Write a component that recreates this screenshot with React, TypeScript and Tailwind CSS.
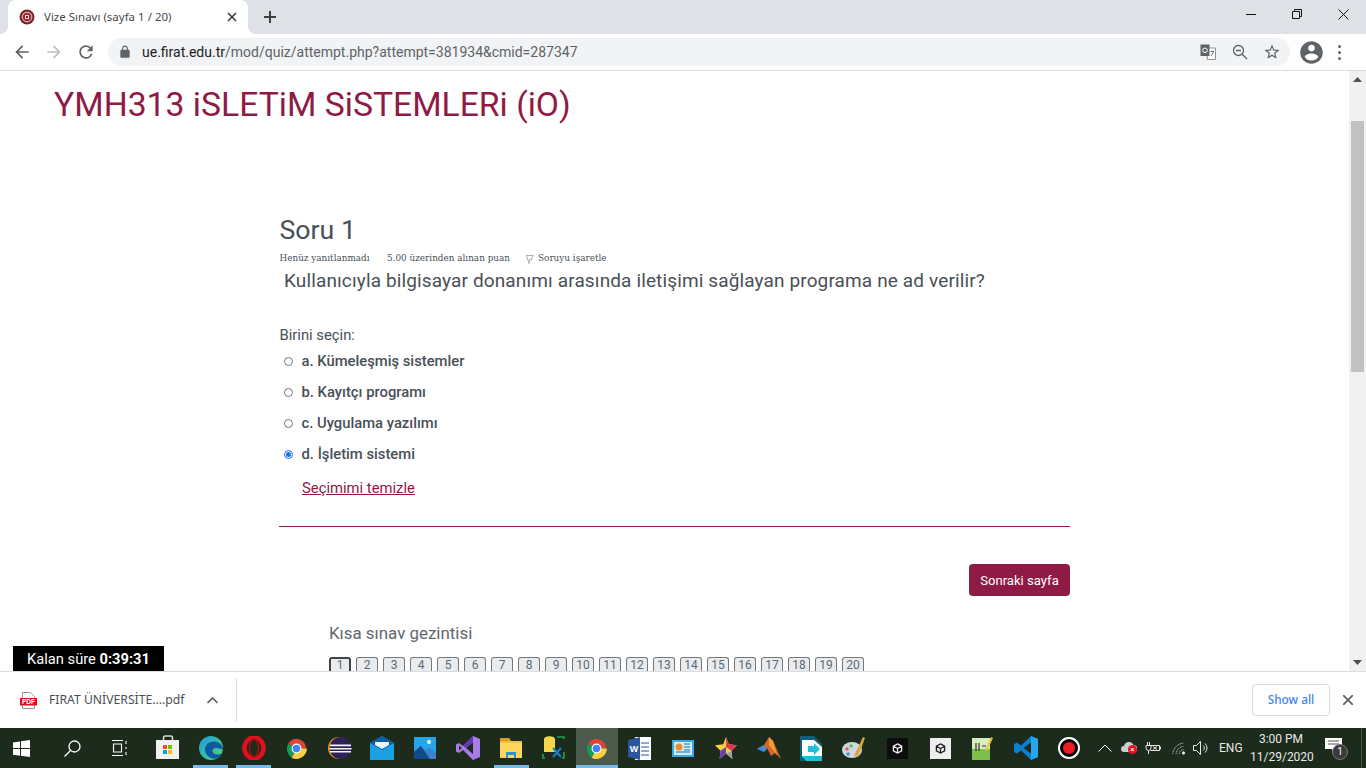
import type { ReactNode } from 'react';

const ui = 'font-["Noto_Sans",sans-serif]';

function M({ d, size = 20, className = '' }: { d: string; size?: number; className?: string }) {
  return (
    <svg width={size} height={size} viewBox="0 0 24 24" className={className} fill="currentColor">
      <path d={d} />
    </svg>
  );
}

const ARROW = 'M20 11H7.83l5.59-5.59L12 4l-8 8 8 8 1.41-1.41L7.83 13H20v-2z';
const RELOAD =
  'M17.65 6.35A7.958 7.958 0 0012 4c-4.42 0-7.99 3.58-7.99 8s3.57 8 7.99 8c3.73 0 6.84-2.55 7.73-6h-2.08A5.99 5.99 0 0112 18c-3.31 0-6-2.69-6-6s2.69-6 6-6c1.66 0 3.14.69 4.22 1.78L13 11h7V4l-2.35 2.35z';
const LOCK =
  'M18 8h-1V6c0-2.76-2.24-5-5-5S7 3.24 7 6v2H6c-1.1 0-2 .9-2 2v10c0 1.1.9 2 2 2h12c1.1 0 2-.9 2-2V10c0-1.1-.9-2-2-2zM9 6c0-1.66 1.34-3 3-3s3 1.34 3 3v2H9V6z';
const ACCOUNT =
  'M12 2C6.48 2 2 6.48 2 12s4.48 10 10 10 10-4.48 10-10S17.52 2 12 2zm0 3c1.66 0 3 1.34 3 3s-1.34 3-3 3-3-1.34-3-3 1.34-3 3-3zm0 14.2c-2.5 0-4.71-1.28-6-3.22.03-1.99 4-3.08 6-3.08 1.99 0 5.97 1.09 6 3.08-1.29 1.94-3.5 3.22-6 3.22z';

function TabBar() {
  return (
    <div className="h-[34px] bg-[#dee1e6] flex items-end pl-2 relative">
      <div className="w-[240px] h-[34px] bg-white rounded-t-[8px] flex items-center pl-[11px] pr-[9px] relative">
        <span className="absolute -left-2 bottom-0 w-2 h-2 bg-white"><span className="block w-2 h-2 bg-[#dee1e6] rounded-br-[8px]" /></span>
        <span className="absolute -right-2 bottom-0 w-2 h-2 bg-white"><span className="block w-2 h-2 bg-[#dee1e6] rounded-bl-[8px]" /></span>
        <svg width="16" height="16" viewBox="0 0 16 16">
          <circle cx="8" cy="8" r="7.5" fill="#7d2327" />
          <circle cx="8" cy="8" r="5.4" fill="#c9a6a6" />
          <circle cx="8" cy="8" r="4" fill="#a3212a" />
          <rect x="6" y="6" width="4" height="4" fill="#ecdcdc" />
          <rect x="7" y="7" width="2" height="2" fill="#8f1d24" />
        </svg>
        <span className={`ml-[9px] text-[11.5px] text-[#45494d] ${ui}`}>Vize Sınavı (sayfa 1 / 20)</span>
        <svg width="10" height="10" viewBox="0 0 10 10" className="ml-auto mr-[2px]" stroke="#3c4043" strokeWidth="1.7">
          <path d="M1 1l8 8M9 1l-8 8" />
        </svg>
      </div>
      <svg width="12" height="12" viewBox="0 0 12 12" className="ml-[16px] mb-[11px]" stroke="#3c4043" strokeWidth="2">
        <path d="M6 0v12M0 6h12" />
      </svg>
      <div className="ml-auto flex h-[34px] items-start text-black">
        <div className="w-[46px] h-[28px] flex items-center justify-center">
          <svg width="10" height="10" viewBox="0 0 10 10" stroke="#111" strokeWidth="1"><path d="M0 5.5h10" /></svg>
        </div>
        <div className="w-[46px] h-[28px] flex items-center justify-center">
          <svg width="10" height="10" viewBox="0 0 10 10" stroke="#111" strokeWidth="1" fill="none"><path d="M.5 2.5h7v7h-7zM2.5 2.5v-2h7v7h-2" /></svg>
        </div>
        <div className="w-[46px] h-[28px] flex items-center justify-center">
          <svg width="11" height="11" viewBox="0 0 11 11" stroke="#111" strokeWidth="1"><path d="M.5.5l10 10M10.5.5l-10 10" /></svg>
        </div>
      </div>
    </div>
  );
}

function Toolbar() {
  return (
    <div className="h-[37px] bg-white border-b border-[#dadce0] flex items-start pt-[4px] shrink-0">
      <div className="w-[108px] flex items-center h-[28px] pl-[12px] text-[#5f6368]">
        <M d={ARROW} size={20} />
        <M d={ARROW} size={20} className="ml-[12px] text-[#bcc0c4] rotate-180" />
        <M d={RELOAD} size={20} className="ml-[12px]" />
      </div>
      <div className="w-[1182px] h-[28px] bg-[#f1f3f4] rounded-full flex items-center pl-[10px] pr-[10px]">
        <M d={LOCK} size={14} className="text-[#5f6368]" />
        <span className='ml-[10px] text-[14px] text-[#5f6368] font-["Roboto",sans-serif]'>
          <span className="text-[#202124]">ue.firat.edu.tr</span>/mod/quiz/attempt.php?attempt=381934&amp;cmid=287347
        </span>
        <svg width="16" height="16" viewBox="0 0 16 16" className="ml-auto">
          <path d="M6 4h9.500v11.500H7.500z" fill="#fff" stroke="#777" strokeWidth=".8" />
          <path d="M.5 .5h9v11.500h-9z" fill="#5f6368" />
          <circle cx="5" cy="6.300" r="2.300" fill="none" stroke="#fff" strokeWidth="1" />
          <path d="M10.500 7.500h3.500M12.200 6.500v1M11 12l2.500-4" stroke="#5f6368" strokeWidth=".9" fill="none" />
        </svg>
        <svg width="16" height="16" viewBox="0 0 16 16" className="ml-[16px]" stroke="#5f6368" strokeWidth="1.300" fill="none">
          <circle cx="6.500" cy="6.500" r="5" />
          <path d="M10.200 10.200L15 15M4 6.500h5" />
        </svg>
        <svg width="18" height="18" viewBox="0 0 24 24" className="ml-[15px] mr-[-1px]" fill="#5f6368">
          <path d="M22 9.240l-7.190-.62L12 2 9.190 8.630 2 9.240l5.460 4.730L5.820 21 12 17.270 18.180 21l-1.630-7.030L22 9.240zM12 15.400l-3.760 2.270 1-4.280-3.320-2.880 4.380-.38L12 6.100l1.710 4.040 4.380.38-3.320 2.880 1 4.280L12 15.400z" />
        </svg>
      </div>
      <div className="flex items-center h-[28px] text-[#5f6368]">
        <M d={ACCOUNT} size={27} className="ml-[8px]" />
        <div className="ml-[13px] flex flex-col gap-[3px]">
          <span className="w-[3px] h-[3px] rounded-full bg-[#5f6368]" />
          <span className="w-[3px] h-[3px] rounded-full bg-[#5f6368]" />
          <span className="w-[3px] h-[3px] rounded-full bg-[#5f6368]" />
        </div>
      </div>
    </div>
  );
}

function Option({ label, checked }: { label: string; checked?: boolean }) {
  return (
    <div className="h-[31px] flex items-center pl-[5px]">
      {checked ? (
        <span className="w-[9px] h-[9px] rounded-full bg-white border border-[#1a73e8] flex items-center justify-center">
          <span className="w-[5px] h-[5px] rounded-full bg-[#1a73e8]" />
        </span>
      ) : (
        <span className="w-[9px] h-[9px] rounded-full bg-white border border-[#767676]" />
      )}
      <span className="ml-[8.500px] text-[14.800px] font-medium text-[#495057]">{label}</span>
    </div>
  );
}

function QuizPage() {
  const pages = Array.from({ length: 20 }, (_, i) => i + 1);
  return (
    <div className='flex-1 min-w-0 font-["Roboto",sans-serif]'>
      <h1 className="pl-[54px] pt-[13px] text-[33.700px] leading-[42px] text-[#8f1a45]">YMH313 iSLETiM SiSTEMLERi (iO)</h1>
      <div className="ml-[279px] w-[791px] mt-[88px]">
        <h2 className="pl-[0.500px] text-[26.700px] leading-[32px] text-[#495057]">Soru 1</h2>
        <div className='flex items-center mt-[7px] h-[12px] pl-[0.500px] text-[8.850px] text-[#495057] font-["DejaVu_Serif",serif]'>
          <span className="w-[107.500px] shrink-0">Henüz yanıtlanmadı</span>
          <span className="w-[139px] shrink-0">5.00 üzerinden alınan puan</span>
          <svg width="8" height="9" viewBox="0 0 8 9" className="shrink-0" fill="none" stroke="#999" strokeWidth=".8">
            <path d="M.5.500h7L5.500 3 6 5 3.500 4.500 3 8.500z" />
          </svg>
          <span className="ml-[4px]">Soruyu işaretle</span>
        </div>
        <p className="mt-[4px] pl-[5px] text-[19px] tracking-[0.13px] leading-[24px] text-[#495057]">
          Kullanıcıyla bilgisayar donanımı arasında iletişimi sağlayan programa ne ad verilir?
        </p>
        <div className="mt-[32px] pl-[0.500px] text-[14.800px] leading-[20px] text-[#495057]">Birini seçin:</div>
        <div className="mt-[1px]">
          <Option label="a. Kümeleşmiş sistemler" />
          <Option label="b. Kayıtçı programı" />
          <Option label="c. Uygulama yazılımı" />
          <Option label="d. İşletim sistemi" checked />
        </div>
        <a className="block ml-[23px] mt-[8px] text-[14.800px] leading-[20px] text-[#8f1a45] underline">Seçimimi temizle</a>
        <div className="mt-[28px] border-t border-[#8f1a45]" />
        <div className="flex justify-end mt-[37px]">
          <button className="h-[32px] w-[101px] pt-[2px] bg-[#8f1a45] rounded-[4px] text-white text-[13.100px]">Sonraki sayfa</button>
        </div>
        <div className="ml-[50px] mt-[27px] text-[16.900px] leading-[20px] text-[#5f6870]">Kısa sınav gezintisi</div>
        <div className="ml-[50px] mt-[14px] flex gap-[5px]">
          {pages.map((n) => (
            <span
              key={n}
              className={`w-[22px] h-[16px] shrink-0 overflow-hidden rounded-t-[3px] bg-[#e9ecef] border border-b-0 text-center text-[12px] text-[#5f6870] ${n === 1 ? 'border-[#444] border-2 leading-[13px]' : 'border-[#777] leading-[15px]'}`}
            >
              {n}
            </span>
          ))}
        </div>
      </div>
    </div>
  );
}

function Scrollbar() {
  return (
    <div className="w-[17px] shrink-0 bg-[#f1f1f1] flex flex-col items-center relative">
      <svg width="9" height="5" viewBox="0 0 9 5" className="mt-[6px]"><path d="M4.500 0L9 5H0z" fill="#505050" /></svg>
      <div className="w-[13px] h-[251px] bg-[#c1c1c1] mt-[39px]" />
      <svg width="9" height="5" viewBox="0 0 9 5" className="mt-auto mb-[6px]"><path d="M4.500 5L9 0H0z" fill="#505050" /></svg>
    </div>
  );
}

function DownloadBar() {
  return (
    <div className={`h-[57px] bg-white border-t border-[#dadce0] flex items-center shrink-0 ${ui}`}>
      <svg width="17" height="17" viewBox="0 0 17 17" className="ml-[20px]">
        <path d="M2.500.500h8l4 4v12h-12z" fill="#fff" stroke="#999" />
        <rect y="6" width="17" height="7.500" fill="#d5121c" />
        <text x="8.500" y="12" fontSize="6.500" fontWeight="700" fill="#fff" textAnchor="middle" fontFamily="Liberation Sans">PDF</text>
      </svg>
      <span className="ml-[12px] w-[137px] text-[12.200px] text-[#4a4e52]">FIRAT ÜNİVERSİTE....pdf</span>
      <svg width="11" height="7" viewBox="0 0 11 7" className="ml-[21px]" fill="none" stroke="#5f6368" strokeWidth="1.700"><path d="M.5 6l5-5 5 5" /></svg>
      <div className="ml-[18px] w-px h-[44px] bg-[#dadce0]" />
      <button className="ml-auto w-[78px] h-[32px] rounded-[4px] border border-[#dadce0] text-[11.800px] font-medium text-[#4285f4]">Show all</button>
      <svg width="10" height="10" viewBox="0 0 10 10" className="ml-[13px] mr-[13px]" stroke="#5f6368" strokeWidth="1.800"><path d="M0 0l10 10M10 0L0 10" /></svg>
    </div>
  );
}

function Slot({ children, active, open, className = '' }: { children: ReactNode; active?: boolean; open?: boolean; className?: string }) {
  return (
    <div className={`w-[42.900px] h-[40px] shrink-0 flex items-center justify-center relative ${active ? 'bg-[#4b5a4a]' : ''} ${className}`}>
      {children}
      {open && <span className={`absolute bottom-0 h-[3px] bg-[#76b9ed] ${active ? 'inset-x-0' : 'left-[4px] right-[4px]'}`} />}
    </div>
  );
}

function ChromeIcon({ size = 23 }: { size?: number }) {
  return (
    <svg width={size} height={size} viewBox="0 0 24 24">
      <path d="M12 12L3.300 7A10 10 0 0 1 22 12z" fill="#db4437" />
      <path d="M12 12l-8.700-5A12 12 0 0 0 7 22z" fill="#0f9d58" />
      <path d="M12 12l-5 10A11.500 11.500 0 0 0 23 12z" fill="#ffcd40" />
      <circle cx="12" cy="12" r="5.200" fill="#fff" />
      <circle cx="12" cy="12" r="4" fill="#4285f4" />
    </svg>
  );
}

function Taskbar() {
  return (
    <div className="h-[40px] bg-[#1c2b1b] flex items-stretch text-white shrink-0 relative">
      <div className="w-[42px] shrink-0 flex items-center justify-center">
        <svg width="17" height="17" viewBox="0 0 17 17" fill="#fff"><path d="M0 2.400l7-1v6.700H0zM8 1.300L17 0v8.100H8zM0 9h7v6.700l-7-1zM8 9h9v8l-9-1.300z" /></svg>
      </div>
      <div className="w-[60px] shrink-0 flex items-center justify-center">
        <svg width="17" height="17" viewBox="0 0 17 17" fill="none" stroke="#fff" strokeWidth="1.300"><circle cx="10.500" cy="6.500" r="5.500" /><path d="M6.500 10.500L.5 16.500" /></svg>
      </div>
      <div className="w-[36px] shrink-0 flex items-center justify-center">
        <svg width="16" height="16" viewBox="0 0 16 16" fill="none" stroke="#fff" strokeWidth="1.100"><path d="M0 .5h11M0 15.500h11M1.500 4h8v8h-8zM14 1v3M14 7v2M14 12v3" /></svg>
      </div>
      <Slot className="ml-[8.600px]">
        <svg width="24" height="26" viewBox="0 0 24 26">
          <path d="M7.500 6V3a2 2 0 0 1 2-2h5a2 2 0 0 1 2 2v3" fill="none" stroke="#d8d8d8" strokeWidth="1.600" />
          <rect y="5" width="23" height="19" fill="#f1f1f1" />
          <rect x="7" y="10" width="4" height="4" fill="#f25022" /><rect x="12" y="10" width="4" height="4" fill="#7fba00" />
          <rect x="7" y="15" width="4" height="4" fill="#00a4ef" /><rect x="12" y="15" width="4" height="4" fill="#ffb900" />
        </svg>
      </Slot>
      <Slot open>
        <svg width="24" height="24" viewBox="0 0 24 24">
          <defs><linearGradient id="edge" x1="0" y1="0" x2="1" y2="1"><stop offset="0" stopColor="#1b9de2" /><stop offset="1" stopColor="#54d66c" /></linearGradient></defs>
          <circle cx="12" cy="12" r="12" fill="url(#edge)" />
          <path d="M24 13c-.500-5-5-7.500-9-7.500-6 0-9 4-9 8 0 6 6 10 11 9 3-1 5-3 6-5-4 2-9 1-9.500-2-.500-2 1.500-3.500 4-3.500 3 0 6 2 6.500 1z" fill="#0c59a4" />
        </svg>
      </Slot>
      <Slot open>
        <svg width="24" height="24" viewBox="0 0 24 24" fill="none"><ellipse cx="12" cy="12" rx="9.500" ry="10.500" stroke="#e0101f" strokeWidth="4.500" /><ellipse cx="12" cy="12" rx="4.500" ry="9" stroke="#a80d18" strokeWidth="1.500" /></svg>
      </Slot>
      <Slot><ChromeIcon /></Slot>
      <Slot>
        <svg width="24" height="24" viewBox="0 0 24 24">
          <circle cx="11" cy="12" r="11" fill="#f7941e" /><circle cx="12.500" cy="12" r="11" fill="#2c2255" />
          <path d="M2 8.500h21v1.800H2zM1.500 12h22v1.500h-22zM2 15h21v1.600H2z" fill="#f7f7f7" />
        </svg>
      </Slot>
      <Slot>
        <svg width="24" height="24" viewBox="0 0 24 24">
          <path d="M0 7l12-7 12 7v17H0z" fill="#1ba1e2" /><path d="M0 7l12-7 12 7-12 7z" fill="#0a5ea8" /><path d="M5 6h14v3l-7 4-7-4z" fill="#e8f4fb" />
        </svg>
      </Slot>
      <Slot>
        <svg width="22" height="22" viewBox="0 0 22 22">
          <rect width="22" height="22" fill="#26a6e8" /><path d="M0 22V14l6-5 5 4 5-2 6 5v6z" fill="#3f7fd0" /><path d="M0 22v-7l7-6 9 13z" fill="#124a87" /><circle cx="15" cy="5" r="2" fill="#fff" />
        </svg>
      </Slot>
      <Slot>
        <svg width="24" height="24" viewBox="0 0 24 24">
          <path d="M17 0l7 3v18l-7 3-10-10-4 3-3-1.500V8.500L3 7l4 3z" fill="#a97be8" /><path d="M17 6v12l-7-6z" fill="#1c2b1b" /><path d="M3 9.500v5l3-2.500z" fill="#1c2b1b" /><path d="M7 10l10-10v6l-7 6z" fill="#6a35b5" />
        </svg>
      </Slot>
      <Slot open>
        <svg width="22" height="20" viewBox="0 0 22 20">
          <path d="M0 0h9l2 3h11v17H0z" fill="#f0c040" /><path d="M0 0h9l2 3H0z" fill="#d99f1c" /><path d="M0 5h22v15H0z" fill="#fbd75b" /><path d="M6 14h10v6h-2v-3H8v3H6z" fill="#2f8fd8" />
        </svg>
      </Slot>
      <Slot>
        <svg width="24" height="24" viewBox="0 0 24 24">
          <path d="M2 3a5 2.500 0 0 1 11 0v13H2z" fill="#f7d64a" /><path d="M15 1h7v2M22 16v6h-2M3 22H1v-4" fill="none" stroke="#22a24a" strokeWidth="1.600" />
          <path d="M11 12l8 9M19 12l-8 9" stroke="#1b7fd0" strokeWidth="2" />
        </svg>
      </Slot>
      <Slot active open><ChromeIcon /></Slot>
      <Slot>
        <svg width="23" height="23" viewBox="0 0 23 23">
          <path d="M7 0h16v23H7z" fill="#fff" /><path d="M13 6h8M13 10h8M13 14h8M13 18h8" stroke="#2b579a" strokeWidth="1.200" /><path d="M0 3l12-3v23L0 20z" fill="#2b579a" />
          <text x="6" y="15" fontSize="9" fontWeight="700" fill="#fff" textAnchor="middle" fontFamily="Liberation Sans">W</text>
        </svg>
      </Slot>
      <Slot>
        <svg width="22" height="17" viewBox="0 0 22 17">
          <rect width="22" height="17" fill="#39a9e0" /><rect x="2" y="2" width="18" height="13" fill="#cfeefb" /><circle cx="7" cy="7" r="3.500" fill="#f28c28" /><path d="M12 4h6M12 7h6M12 10h6M4 12h14" stroke="#1b6ea8" strokeWidth="1.200" />
        </svg>
      </Slot>
      <Slot>
        <svg width="22" height="22" viewBox="0 0 24 24">
          <path d="M12 0l3 8 9 1-6 6 1 9-7-6-7 6 1-9-6-6 9-1z" fill="#f7d038" /><path d="M12 0l3 8 9 1-6 6-6-4z" fill="#d93a5a" /><path d="M18 15l1 9-7-6z" fill="#9aa0a6" /><path d="M12 11v7l-7 6 1-9z" fill="#6a3fb5" />
        </svg>
      </Slot>
      <Slot>
        <svg width="24" height="22" viewBox="0 0 24 22">
          <path d="M0 12l7-4 5-8 4 4 8 18-6-6-4 3-4-8z" fill="#d9642b" /><path d="M0 12l7-4 3 4-3 3z" fill="#3f8fd0" /><path d="M12 0l4 4 4 14-8-10z" fill="#f0a030" />
        </svg>
      </Slot>
      <Slot>
        <svg width="22" height="25" viewBox="0 0 22 25">
          <path d="M0 0h14l8 8v17H0z" fill="#0f5f7a" /><path d="M2 4h12l8 7v14H7l-5-5z" fill="#fff" /><path d="M8 10h6V7l6 6-6 6v-3H8z" fill="#1cc0d8" /><path d="M2 20h20v5H7z" fill="#1cc0d8" />
        </svg>
      </Slot>
      <Slot>
        <svg width="24" height="24" viewBox="0 0 24 24">
          <ellipse cx="10" cy="14" rx="10" ry="8" fill="#cfd8dc" /><circle cx="5" cy="13" r="1.800" fill="#e85d5d" /><circle cx="9" cy="10" r="1.800" fill="#5fb85f" /><circle cx="6" cy="18" r="1.800" fill="#4a90d9" />
          <path d="M12 20l9-19 2 1-7 19z" fill="#d9a441" />
        </svg>
      </Slot>
      <Slot>
        <div className="w-[21px] h-[21px] bg-[#0d0d0d] flex items-center justify-center">
          <svg width="11" height="11" viewBox="0 0 12 12" fill="none" stroke="#eee" strokeWidth="1.400"><path d="M6 1l4.500 2.500v5L6 11 1.500 8.500v-5zM6 6v5M6 6l4.500-2.500M6 6L1.500 3.500" /></svg>
        </div>
      </Slot>
      <Slot>
        <div className="w-[21px] h-[21px] bg-[#eeeeee] flex items-center justify-center">
          <svg width="11" height="11" viewBox="0 0 12 12" fill="none" stroke="#222" strokeWidth="1.400"><path d="M6 1l4.500 2.500v5L6 11 1.500 8.500v-5zM6 6v5M6 6l4.500-2.500M6 6L1.500 3.500" /></svg>
        </div>
      </Slot>
      <Slot>
        <svg width="23" height="25" viewBox="0 0 23 25">
          <rect x="1" y="2" width="18" height="22" fill="#d8ecc0" /><rect x="1" y="13" width="18" height="11" fill="#7cc04a" /><path d="M5 7v8M8 7v8M11 10h4" stroke="#333" strokeWidth="1.200" /><path d="M14 14l6-13 2 1-6 13z" fill="#f0c040" />
        </svg>
      </Slot>
      <Slot>
        <svg width="24" height="24" viewBox="0 0 24 24">
          <path d="M17 0l7 3v18l-7 3-10-9.500L3 17.500 0 16V8l3-1.500 4 3z" fill="#0a7fd0" /><path d="M17 0l7 3v18l-7 3z" fill="#2aa5f0" /><path d="M17 6.500v11L9.500 12z" fill="#1c2b1b" />
        </svg>
      </Slot>
      <Slot>
        <span className="w-[22px] h-[22px] rounded-full border-2 border-white bg-black flex items-center justify-center">
          <span className="w-[12px] h-[12px] rounded-full bg-[#ee1c25]" />
        </span>
      </Slot>
      <div className='ml-auto mr-[23px] flex items-center shrink-0 text-[#e8e8e8] font-["Roboto",sans-serif]'>
        <svg width="14" height="8" viewBox="0 0 14 8" fill="none" stroke="#fff" strokeWidth="1"><path d="M.5 7.500L7 1l6.500 6.500" /></svg>
        <span className="ml-[9px] relative w-[16px] h-[14px]">
          <svg width="16" height="11" viewBox="0 0 16 11" className="absolute top-0 left-0"><path d="M3 11a3 3 0 0 1 0-6 5 5 0 0 1 9.500-1A3.500 3.500 0 0 1 13 11z" fill="#cfcfcf" /></svg>
          <span className="absolute left-[7px] top-[4px] w-[9px] h-[9px] rounded-full bg-[#e81123] flex items-center justify-center text-[8px] leading-none text-white">×</span>
        </span>
        <svg width="16" height="14" viewBox="0 0 16 14" className="ml-[8px]" fill="none" stroke="#e8e8e8" strokeWidth="1"><path d="M5.500 9.500h9v-5h-9M14.500 6h1v2h-1M1 4.500h5v2.500a2.500 2.500 0 0 1-5 0zM2.500 4.500V1M4.500 4.500V1M3.500 9.500V13M8 5.500l4 3M12 5.500l-4 3" /></svg>
        <svg width="14" height="13" viewBox="0 0 17 15" className="ml-[11px]" fill="none" stroke="#e8e8e8" strokeWidth="1"><path d="M1 14A14 14 0 0 1 14 1" strokeDasharray="1.500 .7" /><path d="M5 14A10 10 0 0 1 14 5" strokeDasharray="1.500 .7" /><path d="M9 14a5 5 0 0 1 5-5" strokeDasharray="1.500 .7" /><circle cx="14" cy="13" r="1.500" fill="#e8e8e8" /></svg>
        <svg width="16" height="14" viewBox="0 0 16 14" className="ml-[7px]" fill="none" stroke="#e8e8e8" strokeWidth="1"><path d="M.5 4.500h3l4-4v13l-4-4h-3zM10 4.500a3 3 0 0 1 0 5M12 2.500a6 6 0 0 1 0 9" /></svg>
        <span className="ml-[10px] w-[28px] text-[12px]">ENG</span>
        <div className="ml-[3px] w-[62px] text-center text-[12px] leading-[18px]">
          <div>3:00 PM</div>
          <div>11/29/2020</div>
        </div>
        <span className="ml-[13px] relative w-[18px] h-[24px]">
          <svg width="17" height="15" viewBox="0 0 17 15" className="absolute top-[2px] left-0"><path d="M0 0h17v11h-7l-3 4v-4H0z" fill="#fff" /><path d="M3 3h11M3 6h11" stroke="#555" /></svg>
          <span className="absolute left-[7px] top-[8px] w-[16px] h-[16px] rounded-full bg-[#3a3a3a] border border-[#777] text-center text-[10px] leading-[14px] text-white">1</span>
        </span>
      </div>
      <span className="absolute right-[4px] inset-y-0 w-px bg-[#4a5849]" />
    </div>
  );
}

export default function App() {
  return (
    <div className="h-[768px] w-[1366px] flex flex-col overflow-hidden bg-white">
      <TabBar />
      <Toolbar />
      <div className="h-[600px] flex relative overflow-hidden shrink-0">
        <QuizPage />
        <Scrollbar />
        <div className='absolute left-[13px] bottom-0 w-[151px] h-[25px] pt-px bg-black text-white text-[14.700px] leading-[25px] text-center font-["Roboto",sans-serif]'>
          Kalan süre <b>0:39:31</b>
        </div>
      </div>
      <DownloadBar />
      <Taskbar />
    </div>
  );
}
